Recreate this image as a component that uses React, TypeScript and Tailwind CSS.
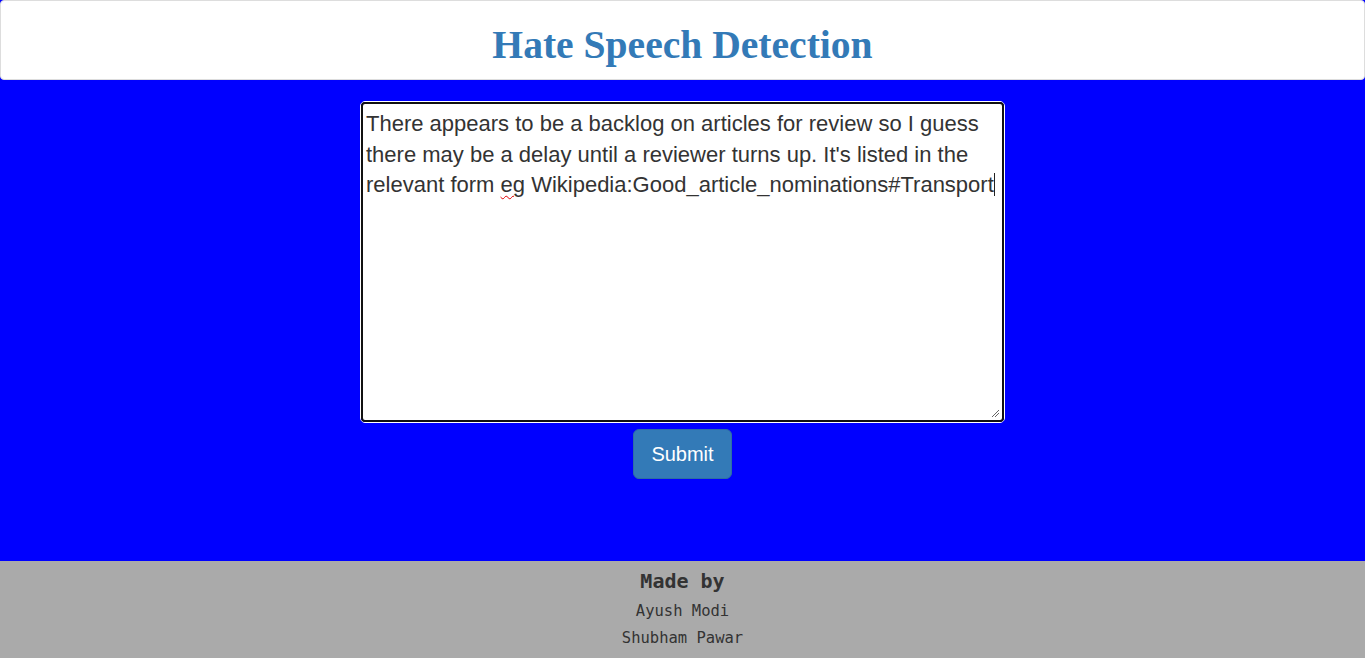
import React from "react";

export default function App() {
  return (
    <div className="min-h-[658px] flex flex-col bg-[#0000ff]">
      <header className="h-[80px] bg-white border border-[#dddddd] rounded-[4px] flex items-center justify-center">
        <h1
          className="text-[39.6px] font-bold text-[#337ab7] leading-none pt-[11px]"
          style={{ fontFamily: '"Liberation Serif", "Times New Roman", serif' }}
        >
          Hate Speech Detection
        </h1>
      </header>
      <main className="h-[481px] flex flex-col items-center pt-[21px]">
        <div className="w-[645px] h-[322px] rounded-[5px] border border-white">
          <div
            className="relative w-full h-full rounded-[4px] border-2 border-[#111111] bg-white pl-[3px] pr-[4px] pt-[5px] text-[22px] leading-[30.5px] text-[#333333]"
            style={{ fontFamily: '"Liberation Sans", Arial, sans-serif' }}
          >
            There appears to be a backlog on articles for review so I guess there may be a delay until a reviewer turns up. It's listed in the relevant form{" "}
            <span className="underline decoration-wavy decoration-[#e00000] decoration-1 underline-offset-[3px]">eg</span>{" "}
            Wikipedia:Good_article_nominations#Transport
            <span className="inline-block w-[1px] h-[23px] bg-[#222] align-[-4px]" />
            <svg className="absolute right-[2px] bottom-[2px]" width="10" height="10" viewBox="0 0 10 10">
              <line x1="2" y1="9" x2="9" y2="2" stroke="#666" strokeWidth="1" />
              <line x1="5" y1="9" x2="9" y2="5" stroke="#666" strokeWidth="1" />
            </svg>
          </div>
        </div>
        <button
          className="mt-[6px] bg-[#337ab7] border border-[#2e6da4] rounded-[6px] px-[17px] py-[10px] text-[20px] leading-[1.4] text-white"
          style={{ fontFamily: '"Liberation Sans", Arial, sans-serif' }}
        >
          Submit
        </button>
      </main>
      <footer
        className="h-[97px] bg-[#aaaaaa] flex flex-col items-center text-[#333333] pt-[8px]"
        style={{ fontFamily: '"DejaVu Sans Mono", "Liberation Mono", monospace' }}
      >
        <div className="text-[20px] font-bold leading-[24px]">Made by</div>
        <div className="text-[15.5px] leading-[27px] mt-[5px]">Ayush Modi</div>
        <div className="text-[15.5px] leading-[27px]">Shubham Pawar</div>
      </footer>
    </div>
  );
}
